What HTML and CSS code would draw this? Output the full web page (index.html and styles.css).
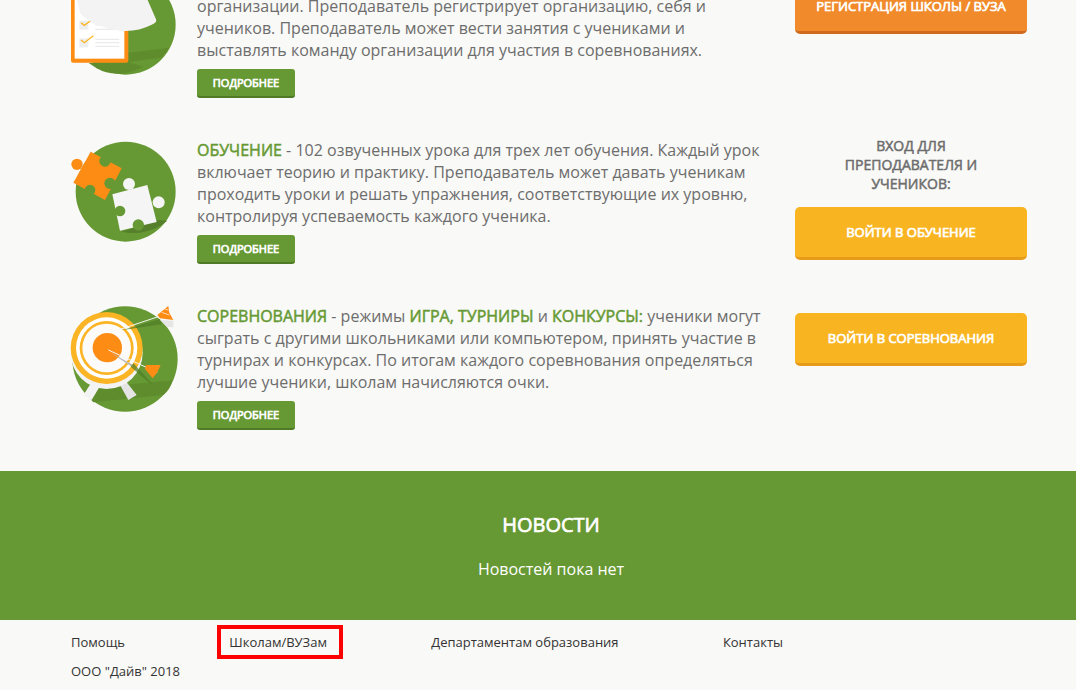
FILE: index.html
```html
<!DOCTYPE html>
<html lang="en">
<head>
  <meta charset="UTF-8">
  <title>Школам и ВУЗам</title>
  <link rel="stylesheet" href="styles.css">
</head>
<body>

<div class="features">

  <!-- Organization -->
  <div class="row row-first">
    <svg class="row-icon" viewBox="0 0 110 125">
      <g transform="translate(-10,30) scale(.3333)">
        <circle cx="197" cy="74" r="150" fill="#669933"/>
        <path d="M205 158 L328 143 Q318 160 302 173 L200 187 Z" fill="#5f8c2d"/>
        <path d="M85 188 L205 186 L250 200 Q170 240 110 205 Z" fill="#5f8c2d"/>
        <rect x="33" y="-90" width="172" height="278" rx="6" fill="#fd8c14"/>
        <rect x="44" y="-90" width="149" height="266" fill="#fff"/>
        <rect x="58" y="62" width="27" height="27" fill="#eee"/>
        <rect x="58" y="115" width="27" height="27" fill="#eee"/>
        <path d="M63 68 L73 76 L95 60 M63 120 L73 128 L100 107" fill="none" stroke="#fbb424" stroke-width="4"/>
        <path d="M106 75 H178 M106 88 H178 M106 118 H178 M106 128 H178 M106 139 H178" stroke="#e6e6e6" stroke-width="3"/>
        <path d="M45 -30 L250 -30 L288 58 Q292 68 275 74 Q225 100 165 90 Q90 75 60 38 Z" fill="#f3f3f3"/>
      </g>
    </svg>
    <div class="row-text">
      <p><span class="accent">ОРГАНИЗАЦИЯ</span> - школа, вуз или иная образовательная организация.
        организации. Преподаватель регистрирует организацию, себя и
        учеников. Преподаватель может вести занятия с учениками и
        выставлять команду организации для участия в соревнованиях.</p>
      <a class="more-btn" href="#">ПОДРОБНЕЕ</a>
    </div>
    <div class="row-side side-first">
      <a class="big-btn big-orange" href="#">РЕГИСТРАЦИЯ ШКОЛЫ / ВУЗА</a>
    </div>
  </div>

  <!-- Learning -->
  <div class="row">
    <svg class="row-icon" viewBox="0 0 110 125">
      <g transform="translate(-10,-6) scale(.3333)">
        <circle cx="197" cy="185" r="150" fill="#669933"/>
        <path d="M185 305 L295 270 L322 272 Q290 300 240 308 Q210 311 185 305 Z" fill="#557f2b"/>
        <path d="M92 65 L185 115 L135 210 L40 158 Z" fill="#fd8c14"/>
        <circle cx="51" cy="103" r="17" fill="#fd8c14"/>
        <circle cx="135" cy="93" r="17" fill="#669933"/>
        <circle cx="150" cy="160" r="17" fill="#669933"/>
        <circle cx="90" cy="180" r="16" fill="#669933"/>
        <path d="M157 193 L262 165 L290 276 L180 302 Z" fill="#f5f5f5"/>
        <circle cx="207" cy="162" r="18" fill="#f5f5f5"/>
        <circle cx="296" cy="217" r="18" fill="#f5f5f5"/>
        <circle cx="180" cy="243" r="16" fill="#669933"/>
        <circle cx="235" cy="285" r="17" fill="#669933"/>
      </g>
    </svg>
    <div class="row-text">
      <p><span class="accent">ОБУЧЕНИЕ</span> - 102 озвученных урока для трех лет обучения. Каждый урок
        включает теорию и практику. Преподаватель может давать ученикам
        проходить уроки и решать упражнения, соответствующие их уровню,
        контролируя успеваемость каждого ученика.</p>
      <a class="more-btn" href="#">ПОДРОБНЕЕ</a>
    </div>
    <div class="row-side">
      <div class="side-title">ВХОД ДЛЯ<br>ПРЕПОДАВАТЕЛЯ И<br>УЧЕНИКОВ:</div>
      <a class="big-btn big-yellow" href="#">ВОЙТИ В ОБУЧЕНИЕ</a>
    </div>
  </div>

  <!-- Competitions -->
  <div class="row">
    <svg class="row-icon" viewBox="0 0 110 125">
      <g transform="translate(-10,-7) scale(.3333)">
        <circle cx="195" cy="192" r="158" fill="#669933"/>
        <path d="M72 285 L210 268 L338 256 Q330 285 310 300 L100 322 Q82 305 72 285 Z" fill="#5f8c2d"/>
        <path d="M95 262 L70 300 L95 315 L122 270 Z" fill="#f3f3f3"/>
        <path d="M180 270 L205 315 L230 300 L200 262 Z" fill="#e4e4e4"/>
        <circle cx="140" cy="174" r="108" fill="#f3f3f3"/>
        <circle cx="140" cy="159" r="108" fill="#fbb424"/>
        <circle cx="140" cy="159" r="92" fill="#fff"/>
        <circle cx="140" cy="159" r="81" fill="#fbb424"/>
        <circle cx="140" cy="159" r="73" fill="#fdfbf9"/>
        <circle cx="142" cy="158" r="44" fill="#fd8c14"/>
        <path d="M185 106 L300 72 L305 88 Z" fill="#4f7a26" opacity=".7"/>
        <path d="M175 105 L310 60" stroke="#f5f5f5" stroke-width="3"/>
        <path d="M292 60 L325 33 L328 53 L340 75 L300 70 Z" fill="#fd8c14"/>
        <path d="M305 52 L328 60 M315 42 L326 46" stroke="#fff" stroke-width="2"/>
        <path d="M300 75 L340 77 L340 97 L320 95 Z" fill="#e6e6e6"/>
        <path d="M150 172 L220 210 L215 215 Z" fill="#bbb"/>
        <path d="M220 205 L280 270 L262 258 L212 215 Z" fill="#4f7a26" opacity=".7"/>
        <path d="M145 165 L292 232" stroke="#f5f5f5" stroke-width="3"/>
        <path d="M255 222 L258 210 L302 210 L292 232 L278 250 Z" fill="#fd8c14"/>
      </g>
    </svg>
    <div class="row-text">
      <p><span class="accent">СОРЕВНОВАНИЯ</span> - режимы <span class="accent">ИГРА,</span> <span class="accent">ТУРНИРЫ</span> и <span class="accent">КОНКУРСЫ:</span> ученики могут
        сыграть с другими школьниками или компьютером, принять участие в
        турнирах и конкурсах. По итогам каждого соревнования определяться
        лучшие ученики, школам начисляются очки.</p>
      <a class="more-btn" href="#">ПОДРОБНЕЕ</a>
    </div>
    <div class="row-side side-last">
      <a class="big-btn big-yellow" href="#">ВОЙТИ В СОРЕВНОВАНИЯ</a>
    </div>
  </div>

</div>

<!-- News -->
<div class="news">
  <h2>НОВОСТИ</h2>
  <p>Новостей пока нет</p>
</div>

<!-- Footer -->
<div class="footer">
  <div class="footer-links">
    <a href="#">Помощь</a>
    <a class="marked" href="#">Школам/ВУЗам</a>
    <a href="#">Департаментам образования</a>
    <a href="#">Контакты</a>
  </div>
  <div class="copyright">ООО "Дайв" 2018</div>
</div>

</body>
</html>
```

FILE: styles.css
```css
* { box-sizing: border-box; }

html, body {
  margin: 0;
  padding: 0;
  font-family: "Open Sans", sans-serif;
  background-color: #f9f9f7;
  color: #6d6d6d;
}

/* page is scrolled down, the first row is cut by the window */
.features {
  margin-top: -30px;
  padding: 0 49px 0 70px;
}

.row {
  display: flex;
  height: 166px;
}

.row-icon {
  width: 110px;
  height: 125px;
  flex-shrink: 0;
}

.row-text {
  width: 580px;
  margin-left: 17px;
  padding-top: 3px;
}

.row-text p {
  margin: 0 0 8px;
  font-size: 16px;
  line-height: 22px;
}

/* the bold in this design is a thickened regular face, same advance widths */
.accent,
.side-title {
  font-weight: 400;
  -webkit-text-stroke: 0.5px currentColor;
}

.more-btn,
.big-btn,
.news h2 {
  font-weight: 400;
  -webkit-text-stroke: 0.7px currentColor;
}

.accent {
  color: #669933;
}

.more-btn {
  display: block;
  width: 98px;
  height: 29px;
  line-height: 27px;
  text-align: center;
  background: #669933;
  border-bottom: 2px solid #4f7a26;
  border-radius: 3px;
  color: white;
  font-size: 11px;
  text-decoration: none;
}

.row-side {
  width: 232px;
  margin-left: 18px;
  text-align: center;
}

.side-first { padding-top: 11px; }
.side-last { padding-top: 11px; }

.side-title {
  height: 71px;
  font-size: 14px;
  line-height: 19px;
}

.big-btn {
  display: block;
  height: 53px;
  line-height: 50px;
  border-radius: 5px;
  color: white;
  font-size: 13px;
  text-decoration: none;
}

.big-orange {
  background: #f18a2a;
  border-bottom: 3px solid #d06a1e;
}

.big-yellow {
  background: #f9b521;
  border-bottom: 3px solid #e79b1a;
}

.news {
  height: 149px;
  margin-top: 3px;
  padding: 40px 0 0 26px;
  background: #669933;
  color: white;
  text-align: center;
}

.news h2 {
  margin: 0 0 19px;
  font-size: 20px;
  line-height: 28px;
}

.news p {
  margin: 0;
  font-size: 16px;
  line-height: 22px;
}

.footer {
  padding: 13px 0 0 71px;
  font-size: 13px;
  color: #333;
}

.footer-links {
  display: flex;
  gap: 104.3px;
  line-height: 18px;
}

.footer a {
  color: #333;
  text-decoration: none;
}

.marked {
  position: relative;
}

/* red annotation frame around the link */
.marked::after {
  content: "";
  position: absolute;
  top: -8px;
  bottom: -8px;
  left: -12.3px;
  right: -16.5px;
  border: 4px solid #ff0000;
}

.copyright {
  margin-top: 11px;
  line-height: 18px;
}
```
